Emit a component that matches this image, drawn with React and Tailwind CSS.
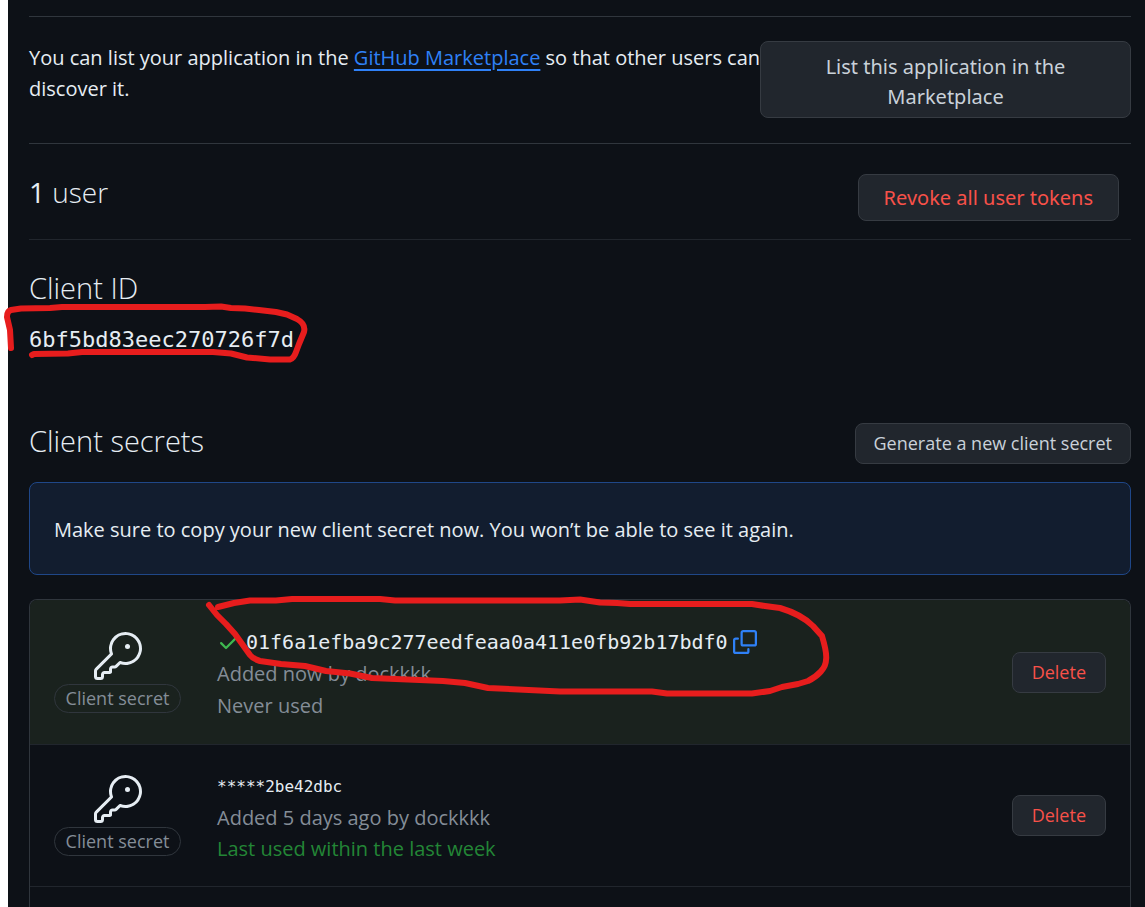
import React from 'react';
import { GoKey } from 'react-icons/go';

function CheckIcon() {
  return (
    <svg viewBox="0 0 16 16" className="size-6 shrink-0 fill-[#3fb950]" aria-hidden="true">
      <path d="M13.78 4.22a.75.75 0 0 1 0 1.06l-7.25 7.25a.75.75 0 0 1-1.06 0L2.22 9.28a.75.75 0 0 1 1.06-1.06L6 10.94l6.72-6.72a.75.75 0 0 1 1.06 0Z" />
    </svg>
  );
}

function CopyIcon() {
  return (
    <svg viewBox="0 0 16 16" className="size-6 fill-[#2f81f7]" aria-hidden="true">
      <path d="M0 6.75C0 5.784.784 5 1.75 5h1.5a.75.75 0 0 1 0 1.5h-1.5a.25.25 0 0 0-.25.25v7.5c0 .138.112.25.25.25h7.5a.25.25 0 0 0 .25-.25v-1.5a.75.75 0 0 1 1.5 0v1.5A1.75 1.75 0 0 1 9.25 16h-7.5A1.75 1.75 0 0 1 0 14.25Z" />
      <path d="M5 1.75C5 .784 5.784 0 6.75 0h7.5C15.216 0 16 .784 16 1.75v7.5A1.75 1.75 0 0 1 14.25 11h-7.5A1.75 1.75 0 0 1 5 9.25Zm1.75-.25a.25.25 0 0 0-.25.25v7.5c0 .138.112.25.25.25h7.5a.25.25 0 0 0 .25-.25v-7.5a.25.25 0 0 0-.25-.25Z" />
    </svg>
  );
}

const buttonBase = 'shrink-0 rounded-lg border border-[#363b42] bg-[#21262d]';

function SecretRow({ className, children }) {
  return (
    <li className={`flex items-center border-b border-[#21262d] px-6 ${className}`}>
      <div className="flex w-[127px] shrink-0 flex-col items-center">
        <GoKey className="size-12 text-[#e6edf3]" aria-hidden="true" />
        <span className="mt-1 w-full rounded-full border border-[#30363d] text-center text-[18px] leading-[27px] whitespace-nowrap text-[#848d97]">
          Client secret
        </span>
      </div>
      <div className="ml-9 min-w-0 flex-1 pt-1 text-[20px] leading-8 text-[#848d97]">{children}</div>
      <button type="button" className={`${buttonBase} h-[41px] px-[19px] text-[18px] text-[#f85149]`}>
        Delete
      </button>
    </li>
  );
}

function PenMarks() {
  return (
    <svg
      className="pointer-events-none absolute top-0 left-0 h-[720px] w-[860px] fill-none stroke-[#e71d1d] stroke-[6]"
      viewBox="0 0 860 720"
      strokeLinecap="round"
      strokeLinejoin="round"
      aria-hidden="true"
    >
      <path d="M11 348 L10 330 L7 317 Q7 311 11 310 L21 308.500 L50 308 L62 307 L205 307 L221 306.500 L231 308 L245 308.500 L259 310 L276 312 L287 314.500 L297 319 Q306 324 304 332 L299 344 L296 352 Q294 358 290 359.500 L270 359.500 L247 357.500 L231 353.500 L213 352 L82 352 L68 353.500 L34 354 L32 355" />
      <path d="M218 607 L234 603 L250 600.500 L276 600.500 L292 599 L380 599 L395 600.500 L560 600.500 L580 599.500 L600 602.500 L617 603 L630 604 L752 604 L765 606 L780 608 C797 613 807 620 813 626 L822 636 C825 646 827 655 826 660 C826 668 818 676 808 681 L798 684 L782 687 L770 691 L752 693.500 L667 693.500 L652 691.500 L560 691.500 L488 688 L465 683 L443 681 L372 678 L350 673.500 L326 671 L305 666 L281 664 L260 661 Q253 659 250 655 L235 634 L226 624 L217 615 L209 605" />
    </svg>
  );
}

export default function App() {
  return (
    <div className="relative flex min-h-screen bg-white pl-2 font-['Open_Sans','Noto_Sans',sans-serif] text-[#e6edf3]">
      <main className="flex min-w-0 flex-1 flex-col bg-[#0d1117] pt-4 pr-[14px] pl-[21px]">
        <section className="flex items-start border-y border-[#30363d] pt-6 pb-[25px]">
          <p className="min-w-0 flex-1 pt-px text-[20px] leading-[31px]">
            <span className="whitespace-nowrap">
              You can list your application in the{' '}
              <a href="#marketplace" className="text-[#2f81f7] underline decoration-2 underline-offset-4">
                GitHub Marketplace
              </a>{' '}
              so that other users can
            </span>{' '}
            discover it.
          </p>
          <button
            type="button"
            className={`${buttonBase} h-[77px] w-[371px] px-12 pt-1 font-['Noto_Sans',sans-serif] text-[20px] leading-[30px] text-[#c9d1d9]`}
          >
            List this application in the Marketplace
          </button>
        </section>

        <section className="flex h-24 items-center justify-between border-b border-[#21262d] pr-3">
          <h2 className="text-[28px] leading-10 font-light">
            <strong className="font-medium">1</strong> user
          </h2>
          <button
            type="button"
            className={`${buttonBase} mt-3 h-[47px] px-[25px] font-['Noto_Sans',sans-serif] text-[20px] text-[#f85149]`}
          >
            Revoke all user tokens
          </button>
        </section>

        <section className="pt-7">
          <h2 className="text-[29px] leading-10 font-light">Client ID</h2>
          <p className="pt-4 font-['DejaVu_Sans_Mono',monospace] text-[22px] leading-8">
            6bf5bd83eec270726f7d
          </p>
        </section>

        <section className="flex flex-1 flex-col pt-[67px]">
          <div className="flex items-start justify-between">
            <h2 className="text-[29px] leading-9 font-light">Client secrets</h2>
            <button
              type="button"
              className={`${buttonBase} h-[41px] px-[18px] text-[18px] text-[#c9d1d9]`}
            >
              Generate a new client secret
            </button>
          </div>

          <p className="mt-[18px] rounded-lg border border-[#1f4788] bg-[#121d2f] px-6 pt-[31px] pb-[29px] text-[20px] leading-[31px]">
            Make sure to copy your new client secret now. You won’t be able to see it again.
          </p>

          <ul className="mt-6 flex-1 overflow-hidden rounded-t-lg border border-b-0 border-[#30363d]">
            <SecretRow className="h-[145px] bg-[#1a221e]">
              <div className="flex items-center gap-[5px]">
                <CheckIcon />
                <code className="font-['DejaVu_Sans_Mono',monospace] text-[20px] text-[#e6edf3]">
                  01f6a1efba9c277eedfeaa0a411e0fb92b17bdf0
                </code>
                <button type="button" aria-label="Copy client secret">
                  <CopyIcon />
                </button>
              </div>
              <p>
                Added now by <a href="#dockkkk">dockkkk</a>
              </p>
              <p>Never used</p>
            </SecretRow>
            <SecretRow className="h-[142px]">
              <code className="block font-['DejaVu_Sans_Mono',monospace] text-[16px] leading-[31px] text-[#e6edf3]">
                *****2be42dbc
              </code>
              <p className="leading-[31px]">
                Added 5 days ago by <a href="#dockkkk" className="font-medium">dockkkk</a>
              </p>
              <p className="leading-[31px] text-[#238636]">Last used within the last week</p>
            </SecretRow>
          </ul>
        </section>
      </main>
      <PenMarks />
    </div>
  );
}
